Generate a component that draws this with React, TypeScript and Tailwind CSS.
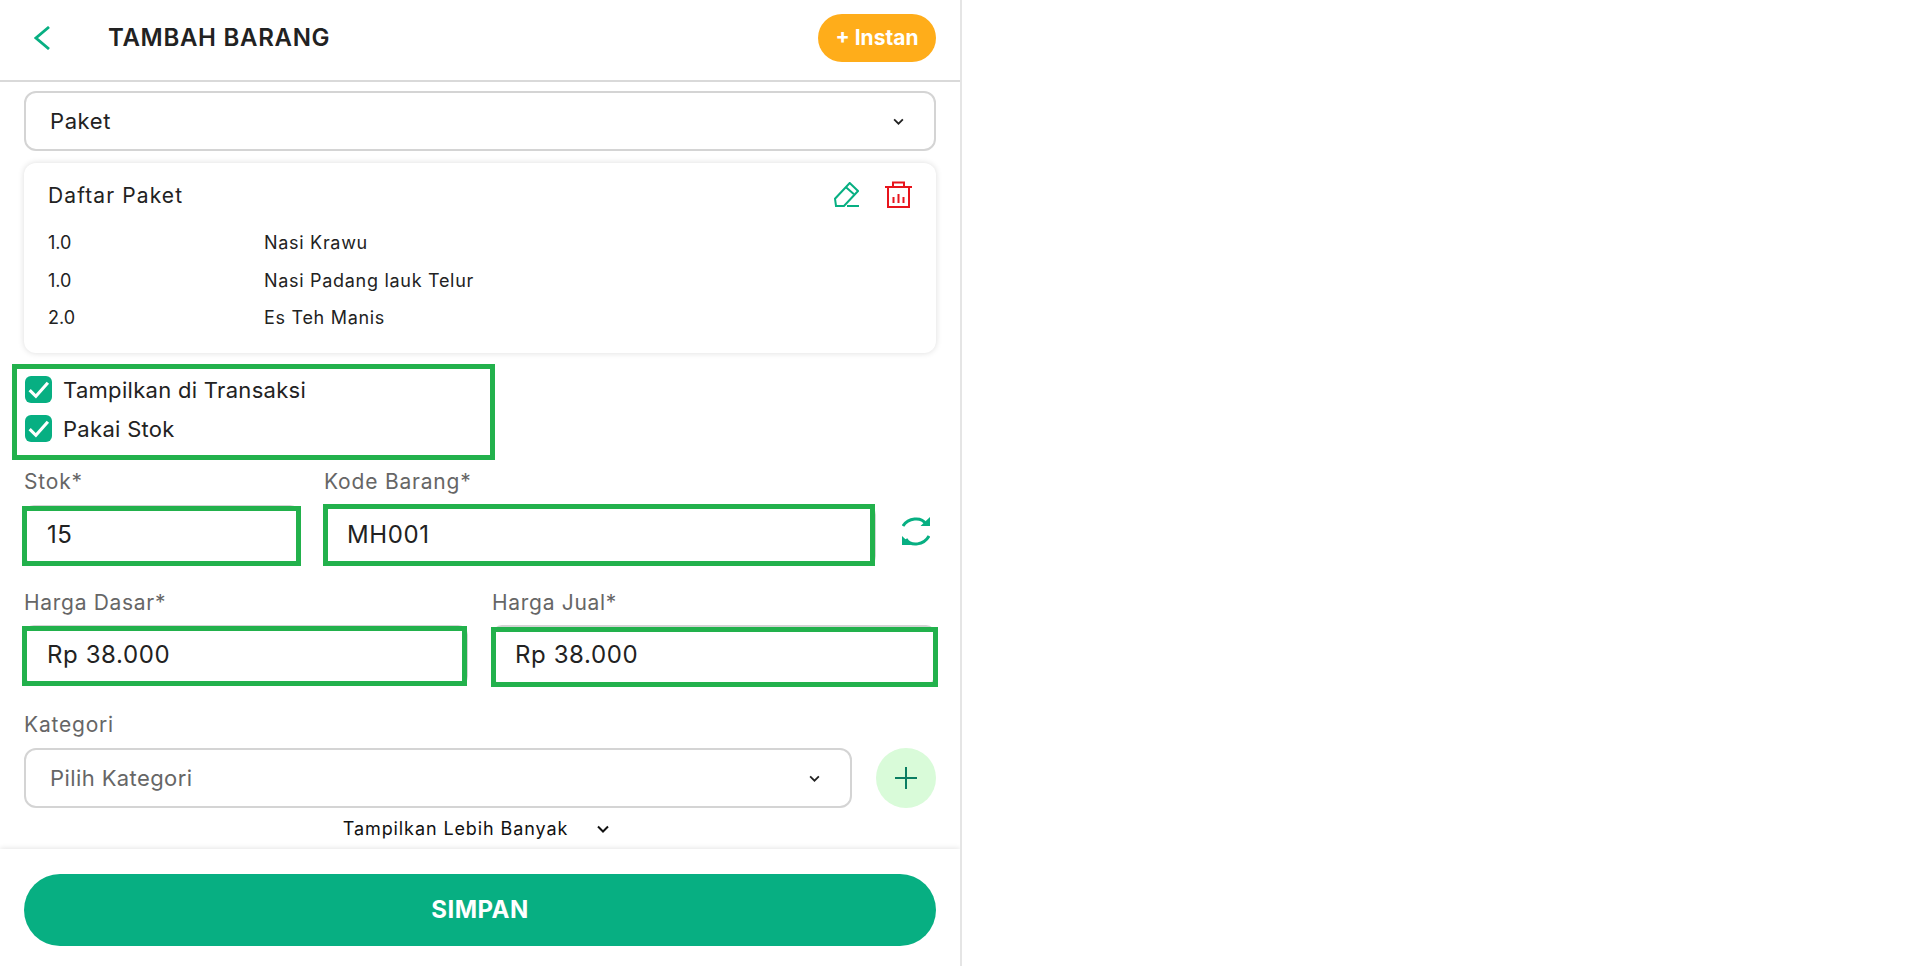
import React from "react";

const FONT = "font-['Inter',sans-serif]";

function Chevron({ className = "" }: { className?: string }) {
  return (
    <svg viewBox="0 0 12 8" className={className} fill="none" stroke="currentColor" strokeWidth="2">
      <path d="M1 1.5 L6 6.5 L11 1.5" />
    </svg>
  );
}

function Check() {
  return (
    <span className="flex h-[27px] w-[27px] items-center justify-center rounded-[6px] bg-[#07af82]">
      <svg viewBox="0 0 24 24" className="h-[25px] w-[25px]" fill="none" stroke="#fff" strokeWidth="3">
        <path d="M3.5 12.5 L9.5 18.5 L21 5.5" />
      </svg>
    </span>
  );
}

function Annotated({ className, mark, value }: { className: string; mark: string; value: string }) {
  return (
    <div className={`relative h-[61px] rounded-[10px] border-2 border-[#d4d4d4] bg-white ${className}`}>
      <div className={`absolute border-[5px] border-[#22b14c] ${mark}`} />
      <div className="flex h-full items-center pb-[2px] pl-[21px] text-[24px] tracking-[0.6px] text-[#222]">{value}</div>
    </div>
  );
}

export default function App() {
  return (
    <div className={`${FONT} flex h-[966px] w-[962px] flex-col overflow-hidden border-r-2 border-[#e5e5e5] bg-white`}>
      <header className="flex h-[82px] shrink-0 items-center border-b-2 border-[#d9d9d9] pb-[4px] pl-[34px] pr-[24px]">
        <svg viewBox="0 0 16 24" className="h-[24px] w-[16px]" fill="none" stroke="#07af82" strokeWidth="2.8">
          <path d="M15 1 L2 12 L15 23" />
        </svg>
        <h1 className="ml-[58px] flex-1 text-[24px] font-semibold tracking-[0.7px] text-[#222]">TAMBAH BARANG</h1>
        <button className="h-[48px] w-[118px] rounded-full bg-[#ffad1a] text-[21px] font-bold text-white">+ Instan</button>
      </header>

      <main className="flex min-h-0 flex-1 flex-col overflow-hidden px-[24px]">
        <div className="mt-[9px] flex h-[60px] shrink-0 items-center justify-between rounded-[12px] border-2 border-[#d4d4d4] pl-[24px] pr-[30px] text-[22px] text-[#222]">
          <span className="tracking-[0.6px]">Paket</span>
          <Chevron className="h-[7px] w-[11px] text-[#222]" />
        </div>

        <section className="mt-[12px] h-[190px] shrink-0 rounded-[12px] bg-white pl-[24px] pr-[24px] pt-[18px] shadow-[0_0_6px_rgba(0,0,0,0.14)]">
          <div className="flex h-[28px] items-center justify-between">
            <span className="mt-[2px] text-[21px] tracking-[1.1px] text-[#222]">Daftar Paket</span>
            <div className="flex items-center gap-[26px]">
              <svg viewBox="0 0 25 26" className="h-[26px] w-[25px]" fill="none" stroke="#07af82" strokeWidth="2">
                <path d="M15.7 1 L24 9 L10 24 L2 24 L1 16.7 Z" />
                <path d="M11.7 5 L20 12.3 M13 24 L25 24" />
              </svg>
              <svg viewBox="0 0 27 27" className="-mt-[2px] h-[27px] w-[27px]" fill="none" stroke="#e8141c" strokeWidth="2">
                <path d="M0 6 L27 6 M8 6 L8 1.5 L19 1.5 L19 6 M3 6 L3 26 L24 26 L24 6" />
                <path d="M8.5 16 L8.5 22 M13.5 13 L13.5 22 M18.5 16 L18.5 22" />
              </svg>
            </div>
          </div>
          <div className="mt-[23px] flex flex-col gap-[15.5px] text-[18px] leading-[22px] text-[#222]">
            {[
              ["1.0", "Nasi Krawu"],
              ["1.0", "Nasi Padang lauk Telur"],
              ["2.0", "Es Teh Manis"],
            ].map(([q, n], i) => (
              <div key={i} className="flex">
                <span className="w-[216px] shrink-0">{q}</span>
                <span className="tracking-[0.7px]">{n}</span>
              </div>
            ))}
          </div>
        </section>

        <div className="-ml-[12px] mt-[11px] flex h-[96px] w-[483px] shrink-0 flex-col gap-[12px] border-[5px] border-[#22b14c] pl-[8px] pt-[7px]">
          {["Tampilkan di Transaksi", "Pakai Stok"].map((t) => (
            <label key={t} className="flex h-[27px] items-center gap-[11px] text-[22px] leading-[29px] tracking-[0.3px] text-[#222]">
              <Check />
              <span className="mt-[2px]">{t}</span>
            </label>
          ))}
        </div>

        <div className="mt-[8px] flex shrink-0 gap-[24px] text-[21px] leading-[28px] tracking-[0.8px] text-[#666]">
          <span className="w-[276px]">Stok*</span>
          <span>Kode Barang*</span>
        </div>
        <div className="mt-[9px] flex shrink-0 items-center gap-[24px]">
          <Annotated className="w-[276px]" mark="-left-[4px] -right-[3px] -bottom-[2px] -top-[1px]" value="15" />
          <div className="flex flex-1 items-center">
            <Annotated className="w-[552px]" mark="-left-[3px] -right-[1px] -bottom-[2px] -top-[3px]" value="MH001" />
            <svg viewBox="0 0 28 31" className="mb-[9px] ml-[26px] h-[31px] w-[28px]" fill="none" stroke="#07af82" strokeWidth="3">
              <path d="M1 10 C6 2 19 0 24 8 M27 20 C22 29 9 31 4 23" />
              <path d="M28 1 L28 10 L18.5 10 Z M0 20 L0 29 L9.5 29 Z" fill="#07af82" stroke="none" />
            </svg>
          </div>
        </div>

        <div className="mt-[23px] flex shrink-0 gap-[24px] text-[21px] leading-[28px] tracking-[0.7px] text-[#666]">
          <span className="w-[444px]">Harga Dasar*</span>
          <span>Harga Jual*</span>
        </div>
        <div className="mt-[8px] flex shrink-0 gap-[24px]">
          <Annotated className="w-[444px]" mark="-left-[4px] -right-[1px] -bottom-[2px] -top-[1px]" value="Rp 38.000" />
          <Annotated className="w-[444px]" mark="-left-[3px] -right-[4px] -bottom-[3px] top-[0px]" value="Rp 38.000" />
        </div>

        <div className="mt-[25px] shrink-0 text-[21px] leading-[28px] tracking-[0.8px] text-[#666]">Kategori</div>
        <div className="mt-[9px] flex shrink-0 items-center justify-between">
          <div className="flex h-[60px] w-[828px] items-center justify-between rounded-[12px] border-2 border-[#d4d4d4] pl-[24px] pr-[30px] text-[22px] tracking-[0.4px] text-[#666]">
            Pilih Kategori
            <Chevron className="h-[7px] w-[11px] text-[#222]" />
          </div>
          <button className="flex h-[60px] w-[60px] items-center justify-center rounded-full bg-[#d9fbd9]">
            <svg viewBox="0 0 22 22" className="h-[22px] w-[22px]" fill="none" stroke="#0a7d62" strokeWidth="2">
              <path d="M11 0 L11 22 M0 11 L22 11" />
            </svg>
          </button>
        </div>
        <div className="mt-[9px] flex shrink-0 items-center justify-center gap-[29px] pr-[8px] text-[18px] leading-[24px] tracking-[0.9px] text-[#111]">
          Tampilkan Lebih Banyak
          <Chevron className="h-[8px] w-[12px] text-[#111]" />
        </div>
      </main>

      <footer className="flex h-[117px] shrink-0 items-start px-[24px] pt-[25px] shadow-[0_-1px_5px_rgba(0,0,0,0.1)]">
        <button className="h-[72px] w-full rounded-full bg-[#07af82] text-[24px] font-bold tracking-[0.5px] text-white">SIMPAN</button>
      </footer>
    </div>
  );
}
